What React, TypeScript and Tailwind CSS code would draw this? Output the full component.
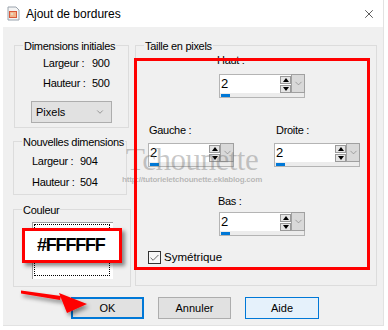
import { Check, ChevronDown, X } from 'lucide-react'

function Spin() {
  return (
    <div className="w-[86px]">
      <div className="flex h-[19px]">
        <div className="flex flex-1 border border-r-0 border-b-0 border-[#b4b4b4] bg-white">
          <span className="pl-[1px] text-[13px] leading-[17px] tracking-normal">2</span>
        </div>
        <div className="flex w-[11px] flex-col justify-center gap-[1px] border-t border-[#b4b4b4] bg-white">
          <div className="flex h-[8px] items-center justify-center border border-[#9a9a9a] bg-[#e5e5e5]">
            <span className="h-0 w-0 border-x-[3px] border-b-[4px] border-x-transparent border-b-black" />
          </div>
          <div className="flex h-[8px] items-center justify-center border border-[#9a9a9a] bg-[#e5e5e5]">
            <span className="h-0 w-0 border-x-[3px] border-t-[4px] border-x-transparent border-t-black" />
          </div>
        </div>
        <div className="flex w-[14px] items-center justify-center border border-[#a0a0a0] bg-[#d9d9d9]">
          <ChevronDown size={11} strokeWidth={1.2} className="text-[#707070]" />
        </div>
      </div>
      <div className="h-[5px] border border-t-0 border-[#b4b4b4] bg-[#ececec] pl-[1px] pt-[1px]">
        <div className="h-[3px] w-[9px] bg-[#0078d7]" />
      </div>
    </div>
  )
}

function Legend({ text }: { text: string }) {
  return (
    <span className="-mt-[7px] ml-[8px] block w-fit bg-[#f0f0f0] px-[1px] leading-[14px]">
      {text}
    </span>
  )
}

function TitleIcon() {
  return (
    <svg width="15" height="15" viewBox="0 0 15 15">
      <path d="M2 1h8l3 3v10H2z" fill="#f4f4f4" stroke="#9aa3ad" strokeWidth="1" />
      <rect x="3" y="5" width="8" height="7" fill="#d9583a" />
      <rect x="4" y="6" width="6" height="5" fill="#f2b48a" />
      <circle cx="6" cy="8" r="1.3" fill="#e9d7c3" />
    </svg>
  )
}

export default function App() {
  return (
    <div className="relative h-[330px] w-[388px] overflow-hidden bg-white font-['Liberation_Sans',Arial,sans-serif] text-[11px] tracking-[-0.3px] text-black">
      <div className="ml-[3px] flex h-[326px] w-[381px] flex-col border-r border-b border-[#e2e2e2] bg-[#f0f0f0]">
        <div className="flex h-[27px] items-center bg-white pl-[3px] pr-[7px]">
          <TitleIcon />
          <span className="ml-[5px] text-[12px] tracking-normal">Ajout de bordures</span>
          <X size={14} strokeWidth={1.1} className="ml-auto" />
        </div>

        <div className="flex gap-[4px] pl-[10px] pt-[18px]">
          <div className="flex w-[118px] flex-col">
            <div className="ml-[1px] flex h-[83px] w-[115px] flex-col border border-[#dcdcdc]">
              <Legend text="Dimensions initiales" />
              <div className="mt-[3px] flex leading-[14px]">
                <span className="ml-[28px] w-[49px]">Largeur :</span>
                <span>900</span>
              </div>
              <div className="mt-[6px] flex leading-[14px]">
                <span className="ml-[28px] w-[49px]">Hauteur :</span>
                <span>500</span>
              </div>
              <div className="ml-[16px] mt-[11px] flex h-[22px] w-[81px] items-center justify-between border border-[#adadad] bg-[#e1e1e1] pl-[4px] pr-[6px]">
                <span className="tracking-normal">Pixels</span>
                <ChevronDown size={10} strokeWidth={1.3} className="text-[#555]" />
              </div>
            </div>

            <div className="mt-[13px] flex h-[54px] w-[114px] flex-col border border-[#dcdcdc]">
              <Legend text="Nouvelles dimensions" />
              <div className="mt-[5px] flex leading-[14px]">
                <span className="ml-[18px] w-[48px]">Largeur :</span>
                <span>904</span>
              </div>
              <div className="mt-[7px] flex leading-[14px]">
                <span className="ml-[18px] w-[48px]">Hauteur :</span>
                <span>504</span>
              </div>
            </div>

            <div className="mt-[14px] flex h-[78px] w-[118px] flex-col border border-[#dcdcdc]">
              <Legend text="Couleur" />
              <div className="ml-[18px] mt-[5px] h-[57px] w-[81px] border-l border-t border-[#a0a0a0] bg-white p-[1px]">
                <div className="h-[52px] w-[76px] border border-dotted border-black" />
              </div>
            </div>
          </div>

          <div className="flex h-[241px] w-[242px] flex-col border border-[#dcdcdc]">
            <Legend text="Taille en pixels" />
            <span className="ml-[81px] leading-[14px]">Haut :</span>
            <div className="ml-[83px] mt-[7px]">
              <Spin />
            </div>
            <div className="mt-[25px] flex leading-[14px]">
              <span className="ml-[13px] w-[127px]">Gauche :</span>
              <span>Droite :</span>
            </div>
            <div className="ml-[12px] mt-[6px] flex gap-[40px]">
              <Spin />
              <Spin />
            </div>
            <span className="ml-[82px] mt-[27px] leading-[14px]">Bas :</span>
            <div className="ml-[83px] mt-[4px]">
              <Spin />
            </div>
            <div className="ml-[12px] mt-[13px] flex items-center gap-[3px]">
              <div className="flex h-[13px] w-[13px] items-center justify-center border border-[#333] bg-[#f7f7f7]">
                <Check size={12} strokeWidth={1.6} className="text-[#333]" />
              </div>
              <span className="text-[11.5px] tracking-normal">Symétrique</span>
            </div>
          </div>
        </div>

        <div className="mt-[10px] flex gap-[14px] pl-[68px] tracking-normal">
          <button className="flex h-[22px] w-[73px] items-center justify-center border-2 border-[#0078d7] bg-[#e1e1e1]">
            OK
          </button>
          <button className="flex h-[22px] w-[73px] items-center justify-center border border-[#adadad] bg-[#e1e1e1]">
            Annuler
          </button>
          <button className="flex h-[22px] w-[74px] items-center justify-center border border-[#0078d7] bg-[#e5f1fb]">
            Aide
          </button>
        </div>
      </div>

      {/* watermark */}
      <div className="pointer-events-none absolute left-[122px] top-[145px] flex flex-col items-center">
        <span className="font-['Liberation_Serif',serif] text-[31px] leading-[30px] tracking-[-0.5px] text-[rgba(110,110,110,0.38)]">
          Tchounette
        </span>
        <span className="text-[8px] font-bold leading-[9px] tracking-[-0.2px] text-[rgba(110,110,110,0.45)]">
          http://tutorieletchounette.eklablog.com
        </span>
      </div>

      {/* annotations */}
      <div className="pointer-events-none absolute left-[134px] top-[58px] h-[212px] w-[236px] border-[3px] border-[#ff0000]" />
      <div className="absolute left-[22px] top-[228px] flex h-[35px] w-[100px] items-center border-[3px] border-[#ff0000] bg-white pl-[12px] shadow-[3px_3px_4px_rgba(0,0,0,0.45)]">
        <span className="text-[18px] font-bold tracking-[-1.2px]">#FFFFFF</span>
      </div>
      <svg className="pointer-events-none absolute left-0 top-0" width="388" height="330">
        <defs>
          <filter id="sh" x="-20%" y="-40%" width="140%" height="200%">
            <feDropShadow dx="2" dy="3" stdDeviation="2" floodColor="#000" floodOpacity="0.45" />
          </filter>
        </defs>
        <g filter="url(#sh)">
          <path d="M21 290.5 L61 296 L60 300 L21 293.5 Z" fill="#ff0000" />
          <path d="M59 293 L87 304 L67 313 Z" fill="#ff0000" />
        </g>
      </svg>
    </div>
  )
}
